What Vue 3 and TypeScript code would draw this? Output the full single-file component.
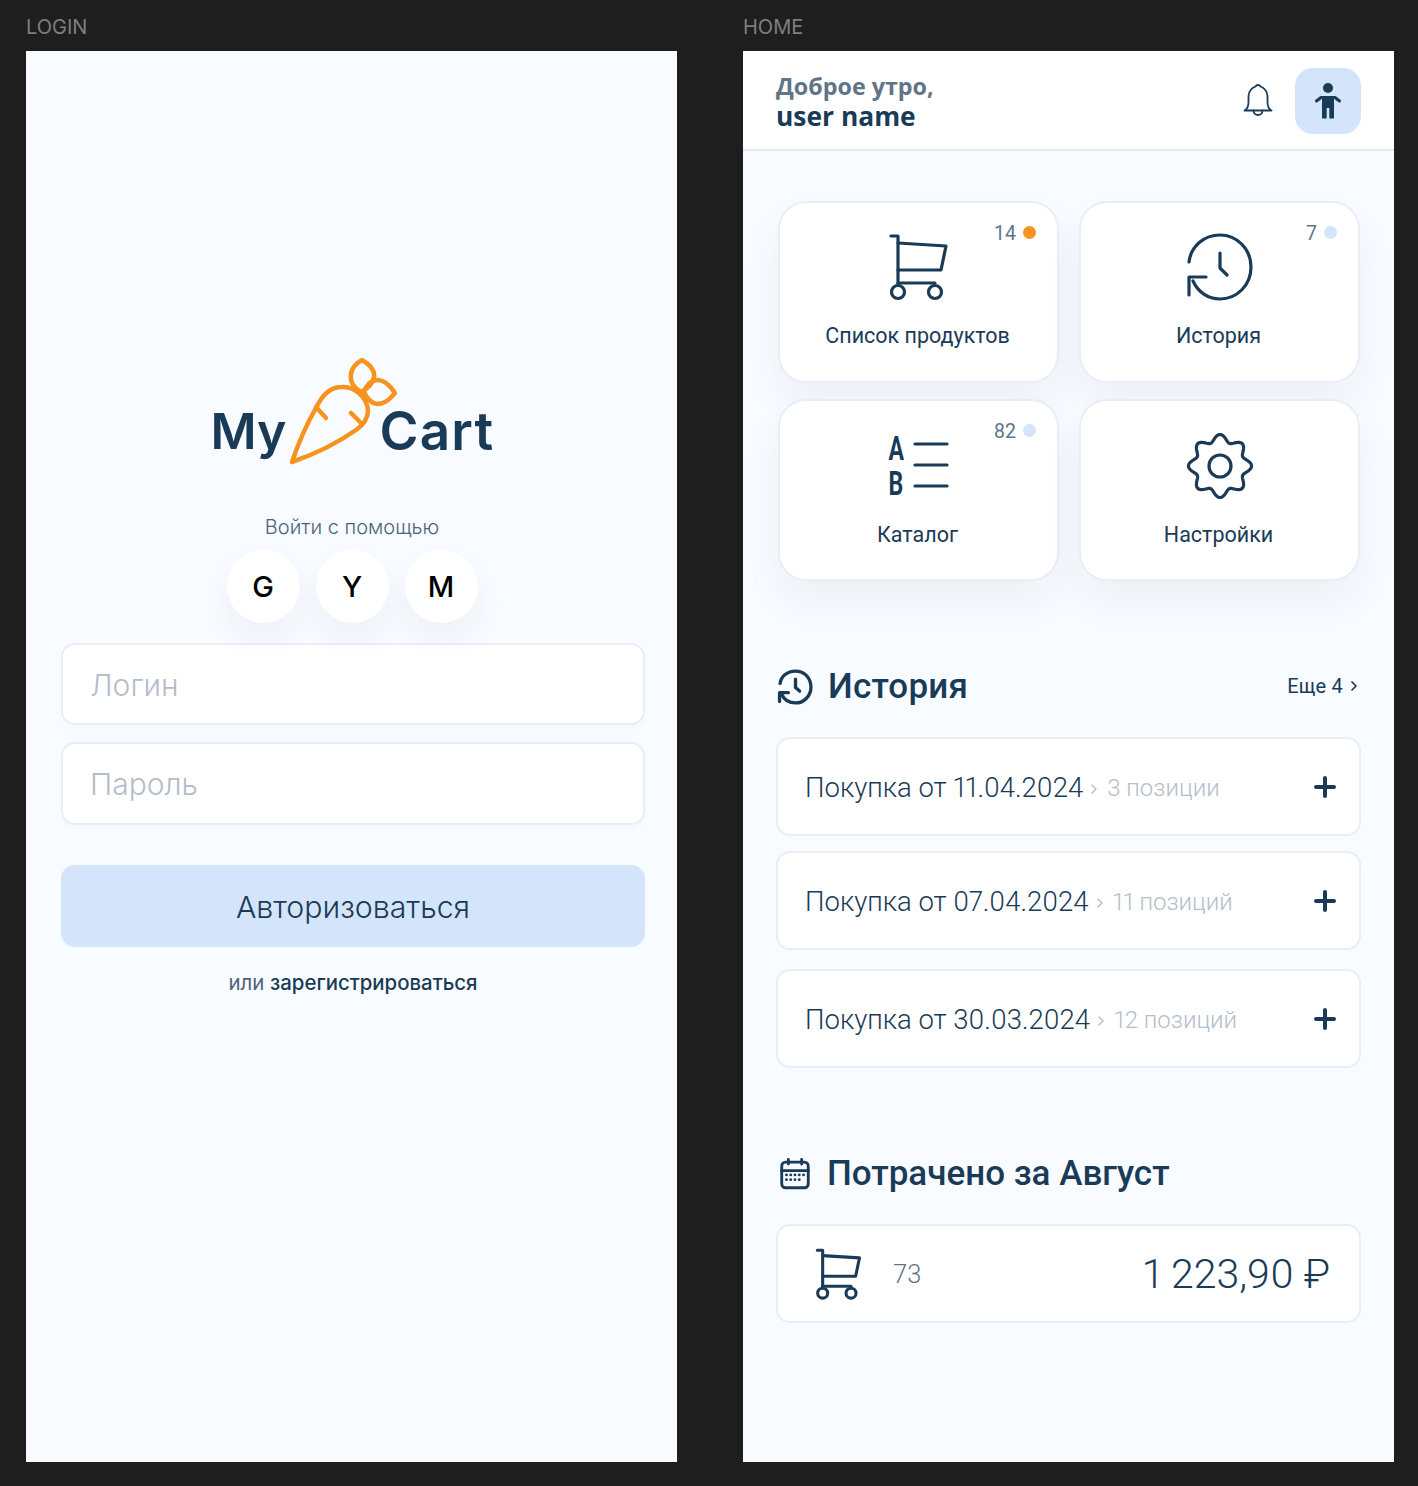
<script setup lang="ts">
const N = 240
const pts: string[] = []
for (let i = 0; i < N; i++) {
  const t = (i / N) * Math.PI * 2
  const r = 28 + 3.5 * Math.cos(8 * t)
  pts.push(`${(36 + r * Math.sin(t)).toFixed(2)} ${(35 - r * Math.cos(t)).toFixed(2)}`)
}
const gear = 'M' + pts.join('L') + 'Z'

const rows = [
  { title: 'Покупка от 11.04.2024', sub: '3 позиции' },
  { title: 'Покупка от 07.04.2024', sub: '11 позиций' },
  { title: 'Покупка от 30.03.2024', sub: '12 позиций' },
]
const calendarDots = [
  [10, 19], [14.5, 19], [19, 19], [23.5, 19], [28, 19],
  [10, 24], [14.5, 24], [19, 24], [23.5, 24],
]
</script>

<template>
  <div class="page">
    <section class="col">
      <div class="label">LOGIN</div>
      <div class="frame login">
        <div class="logo">
          <span class="logo-my">My</span>
          <svg class="carrot" width="108" height="108" viewBox="0 0 108 108" fill="none" stroke="#f7931e" stroke-width="4.5" stroke-linecap="round" stroke-linejoin="round">
            <path d="M3 104C11 80 20 62 28 48C34 36 42 29 53 29C66 28 78 40 79 52C79 62 73 68 67 72C50 84 26 96 3 104Z" />
            <path d="M27 49L37 60M62 55L72 65" />
            <path d="M73 2C80 6 86 12 85 19C84 26 78 31 72 34C65 30 61 24 62 17C62 11 67 5 73 2Z" />
            <path d="M75 34C77 27 82 22 89 22C96 22 102 29 106 35C101 41 96 46 88 46C82 45 78 41 75 34Z" />
          </svg>
          <span class="logo-cart">Cart</span>
        </div>
        <div class="with">Войти с помощью</div>
        <div class="socials">
          <div class="social">G</div>
          <div class="social">Y</div>
          <div class="social">M</div>
        </div>
        <div class="field first">Логин</div>
        <div class="field second">Пароль</div>
        <div class="submit">Авторизоваться</div>
        <div class="register">или <b>зарегистрироваться</b></div>
      </div>
    </section>

    <section class="col">
      <div class="label">HOME</div>
      <div class="frame home">
        <header class="head">
          <div class="greet">
            <div class="g1">Доброе утро,</div>
            <div class="g2">user name</div>
          </div>
          <svg class="bell" width="30" height="36" viewBox="0 0 30 36" fill="none" stroke="#1a3b57" stroke-width="1.8" stroke-linecap="round" stroke-linejoin="round">
            <path d="M1.500 27.500C4.500 26 5.500 23.500 5.500 19V13C5.500 8 9.500 4.500 12.500 3.500C13.500 1.500 16.500 1.500 17.500 3.500C20.500 4.500 24.500 8 24.500 13V19C24.500 23.500 25.500 26 28.500 27.500Z" />
            <path d="M10.500 27.500C10.500 33.500 19.500 33.500 19.500 27.500" />
          </svg>
          <div class="avatar">
            <svg width="28" height="38" viewBox="0 0 28 38" fill="#1a3b57">
              <circle cx="14" cy="6" r="5" />
              <path d="M2.500 19L7 15.500H21L25.500 19" fill="none" stroke="#1a3b57" stroke-width="3" stroke-linecap="round" stroke-linejoin="round" />
              <path d="M8 14H20V36.500H15.300V26H12.700V36.500H8Z" />
            </svg>
          </div>
        </header>

        <main class="body">
          <div class="tiles">
            <div class="tile">
              <div class="badge"><span>14</span><i class="dot orange"></i></div>
              <svg class="tile-icon cart-pos" width="60" height="68" viewBox="0 0 60 68" fill="none" stroke="#1a3b57" stroke-width="3.200" stroke-linecap="round" stroke-linejoin="round">
                <path d="M3 3H10V51" /><path d="M10 10L58 13L53 37H10" /><path d="M10 50H47" />
                <circle cx="10" cy="59" r="6.500" /><circle cx="47" cy="59" r="6.500" />
              </svg>
              <div class="tile-name">Список продуктов</div>
            </div>
            <div class="tile">
              <div class="badge"><span>7</span><i class="dot blue"></i></div>
              <svg class="tile-icon" width="70" height="70" viewBox="0 0 70 70" fill="none" stroke="#1a3b57" stroke-width="3.200" stroke-linecap="round" stroke-linejoin="round">
                <path d="M5 30C7 14 20 3 36 3C53 3 67 17 67 35C67 53 53 67 36 67C24 67 14 60 9 49" />
                <path d="M22 45H5V63" /><path d="M36 21V36L43 43" />
              </svg>
              <div class="tile-name">История</div>
            </div>
            <div class="tile low">
              <div class="badge"><span>82</span><i class="dot blue"></i></div>
              <svg class="tile-icon abc" width="70" height="70" viewBox="0 0 70 70" fill="none" stroke="#1a3b57" stroke-width="3.200" stroke-linecap="round">
                <text class="ab" transform="translate(5.500 29) scale(0.7 1)">A</text>
                <text class="ab" transform="translate(5.500 64) scale(0.7 1)">B</text>
                <path d="M32 13H64M32 34H64M32 55H64" />
              </svg>
              <div class="tile-name">Каталог</div>
            </div>
            <div class="tile low">
              <svg class="tile-icon" width="70" height="70" viewBox="0 0 70 70" fill="none" stroke="#1a3b57" stroke-width="3.200">
                <path :d="gear" /><circle cx="36" cy="35" r="11" />
              </svg>
              <div class="tile-name">Настройки</div>
            </div>
          </div>

          <div class="sec-head history">
            <svg width="36" height="36" viewBox="0 0 70 70" fill="none" stroke="#1a3b57" stroke-width="6.500" stroke-linecap="round" stroke-linejoin="round">
              <path d="M6 28C8 14 20 4 36 4C53 4 66 17 66 35C66 52 53 66 36 66C24 66 14 60 9 49" />
              <path d="M22 46H5V63" /><path d="M36 20V36L44 43" />
            </svg>
            <h2>История</h2>
            <div class="more">Еще 4
              <svg width="8" height="12" viewBox="0 0 8 12" fill="none" stroke="#1a3b57" stroke-width="1.700" stroke-linecap="round" stroke-linejoin="round"><path d="M2 2L6 6L2 10" /></svg>
            </div>
          </div>

          <div class="rows">
            <div v-for="r in rows" :key="r.title" class="row">
              <span class="row-title">{{ r.title }}</span>
              <svg class="chev" width="8" height="14" viewBox="0 0 8 14" fill="none" stroke="#b9c1ce" stroke-width="1.500" stroke-linecap="round" stroke-linejoin="round"><path d="M2 3L6 7L2 11" /></svg>
              <span class="row-sub">{{ r.sub }}</span>
              <svg class="plus" width="22" height="22" viewBox="0 0 22 22" stroke="#1a3b57" stroke-width="4" stroke-linecap="round"><path d="M11 2V20M2 11H20" /></svg>
            </div>
          </div>

          <div class="sec-head spent">
            <svg width="36" height="36" viewBox="0 0 38 36" fill="none" stroke="#1a3b57" stroke-width="3" stroke-linecap="round">
              <rect x="5" y="5.500" width="28" height="27" rx="4" />
              <path d="M5 14.500H33M12 2.500V7.500M26 2.500V7.500" />
              <g fill="#1a3b57" stroke="none">
                <circle v-for="(d, i) in calendarDots" :key="i" :cx="d[0]" :cy="d[1]" r="1.500" />
              </g>
            </svg>
            <h2>Потрачено за Август</h2>
          </div>

          <div class="total">
            <svg class="total-cart" width="46" height="54" viewBox="0 0 60 68" fill="none" stroke="#1a3b57" stroke-width="4" stroke-linecap="round" stroke-linejoin="round">
              <path d="M3 3H10V51" /><path d="M10 10L58 13L53 37H10" /><path d="M10 50H47" />
              <circle cx="10" cy="59" r="6.500" /><circle cx="47" cy="59" r="6.500" />
            </svg>
            <span class="total-count">73</span>
            <span class="total-sum">1 223,90 ₽</span>
          </div>
        </main>
      </div>
    </section>
  </div>
</template>

<style>
html, body { margin: 0; background: #1e1e1e; }
</style>

<style scoped>
.page {
  display: flex;
  gap: 66px;
  width: 1418px;
  height: 1486px;
  padding-left: 26px;
  box-sizing: border-box;
  background: #1e1e1e;
  font-family: Inter, "Noto Sans", sans-serif;
  color: #1a3b57;
  overflow: hidden;
}
.col { width: 651px; }
.label {
  height: 51px;
  line-height: 54px;
  font-size: 20px;
  color: #7f7f7f;
}
.frame {
  height: 1411px;
  background: #f8fbff;
  box-sizing: border-box;
}

/* login */
.login { padding: 307px 32px 0 35px; }
.logo {
  display: flex;
  justify-content: center;
  align-items: flex-end;
  height: 108px;
  font-weight: 600;
  line-height: 65px;
  padding-right: 1px;
}
.logo-my { font-size: 50px; padding-bottom: 2px; margin-right: 3px; }
.logo-cart { font-size: 53px; letter-spacing: 1.2px; padding-bottom: 2px; margin-left: -18px; }
.carrot { flex: none; }
.with {
  margin-top: 48px;
  text-align: center;
  font-size: 20px;
  line-height: 26px;
  font-weight: 300;
  color: #4c6378;
  padding-right: 2px;
}
.socials {
  display: flex;
  justify-content: center;
  gap: 16px;
  margin-top: 10px;
  padding-right: 2px;
}
.social {
  width: 73px;
  height: 73px;
  border-radius: 50%;
  background: #fff;
  color: #000;
  font-size: 29px;
  font-weight: 500;
  display: flex;
  align-items: center;
  justify-content: center;
  box-shadow: 0 16px 32px rgba(30, 60, 100, 0.05);
}
.field {
  height: 83px;
  box-sizing: border-box;
  background: #fff;
  border: 2px solid #e9edf6;
  border-radius: 14px;
  padding: 2px 0 0 27px;
  display: flex;
  align-items: center;
  font-size: 30px;
  font-weight: 300;
  color: #b4bdca;
  box-shadow: 0 4px 10px rgba(30, 60, 100, 0.015);
}
.field.first { margin-top: 20px; height: 82px; }
.field.second { margin-top: 17px; padding-top: 0; }
.submit {
  margin-top: 40px;
  height: 82px;
  padding-top: 2px;
  box-sizing: border-box;
  border-radius: 14px;
  background: #d4e4fb;
  display: flex;
  align-items: center;
  justify-content: center;
  font-size: 30.3px;
  font-weight: 300;
}
.register {
  margin-top: 23px;
  text-align: center;
  font-size: 20.4px;
  line-height: 26px;
  color: #4c6378;
  font-weight: 400;
}
.register b { font-weight: 500; color: #1a3b57; }

/* home */
.head {
  height: 100px;
  box-sizing: border-box;
  background: #fff;
  border-bottom: 2px solid #e6e9ee;
  display: flex;
  align-items: center;
  padding: 2px 33px 0;
  font-family: "Open Sans", sans-serif;
  font-weight: 700;
}
.greet { flex: 1; }
.g1 { font-size: 23.3px; line-height: 30px; color: #5f7488; }
.g2 { font-size: 26.4px; line-height: 30px; color: #1a3b57; }
.bell { margin-right: 22px; }
.avatar {
  width: 66px;
  height: 66px;
  border-radius: 18px;
  background: #d4e4fb;
  display: flex;
  align-items: center;
  justify-content: center;
}
.body {
  padding: 50px 33px 0 33px;
  font-family: Roboto, sans-serif;
}
.tiles {
  display: grid;
  grid-template-columns: 281px 281px;
  grid-auto-rows: 182px;
  column-gap: 20px;
  row-gap: 16px;
  margin-left: 2px;
}
.tile {
  position: relative;
  background: #fff;
  border: 2px solid #e9edf6;
  border-radius: 28px;
  box-sizing: border-box;
  box-shadow: 0 20px 40px rgba(30, 60, 100, 0.05);
  display: flex;
  flex-direction: column;
  align-items: center;
  padding: 29px 2px 0 0;
}
.tile.low { padding-top: 30px; }
.tile-icon { height: 70px; flex: none; }
.abc { overflow: visible; }
.tile-name {
  margin-top: 20px;
  font-size: 21.5px;
  line-height: 28px;
  color: #1a3b57;
}
.cart-pos { margin: 1px 0; height: 68px; }
.badge {
  position: absolute;
  top: 18px;
  right: 21px;
  display: flex;
  align-items: center;
  gap: 7px;
  font-size: 19.5px;
  line-height: 26px;
  color: #5f7488;
}
.dot {
  width: 13px;
  height: 13px;
  border-radius: 50%;
  margin-top: -4px;
}
.dot.orange { background: #f7931e; }
.dot.blue { background: #d4e4fb; }
.ab {
  font-family: Roboto, sans-serif;
  font-size: 33px;
  font-weight: 700;
  fill: #1a3b57;
  stroke: none;
}
.sec-head {
  display: flex;
  align-items: center;
  padding-left: 1px;
}
.sec-head h2 {
  margin: 0 0 0 14px;
  font-size: 35px;
  line-height: 44px;
  font-weight: 500;
  color: #1a3b57;
}
.history { margin-top: 84px; }
.history h2 { letter-spacing: 0.2px; margin-left: 15px; }
.more {
  margin: 0 0 2px auto;
  display: flex;
  align-items: center;
  gap: 7px;
  font-size: 20px;
  font-weight: 400;
  letter-spacing: 0.2px;
  color: #1a3b57;
  padding-right: 3px;
}
.rows {
  margin-top: 28px;
  display: flex;
  flex-direction: column;
  gap: 15px;
  font-variant-numeric: proportional-nums;
}
.rows .row:last-child { margin-top: 4px; }
.row, .total {
  background: #fff;
  border: 2px solid #e9edf6;
  border-radius: 14px;
  height: 99px;
  box-sizing: border-box;
  display: flex;
  align-items: center;
}
.row { padding: 0 23px 0 27px; }
.row-title { font-size: 27.5px; font-weight: 300; padding-top: 2px; }
.chev { margin: 4px 9px 0 7px; }
.row-sub { font-size: 24px; font-weight: 300; color: #b4bdca; padding-top: 3px; }
.plus { margin-left: auto; }
.spent { margin-top: 84px; }
.total { margin-top: 28px; padding: 0 29px 0 37px; }
.total-count { margin-left: 32px; font-size: 25.500px; font-weight: 300; color: #5f7488; }
.total-sum { margin-left: auto; font-size: 41px; font-weight: 300; font-variant-numeric: proportional-nums; }
</style>
